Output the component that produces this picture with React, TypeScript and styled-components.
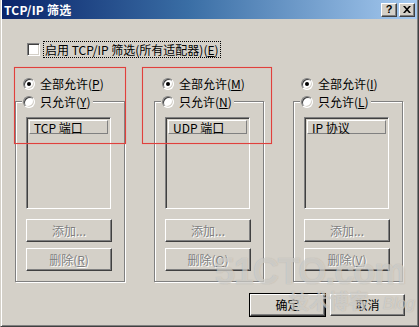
import React from 'react';
import styled, { createGlobalStyle } from 'styled-components';

const GlobalStyle = createGlobalStyle`
  html, body {
    margin: 0;
    padding: 0;
    background: #d4d0c8;
  }
  * {
    box-sizing: border-box;
  }
`;

const FONT = `"Noto Sans CJK SC", "Liberation Sans", sans-serif`;

type Column = {
  all: string;
  allKey: string;
  only: string;
  onlyKey: string;
  header: string;
  delKey: string;
};

const columns: Column[] = [
  { all: '全部允许', allKey: 'P', only: '只允许', onlyKey: 'Y', header: 'TCP 端口', delKey: 'R' },
  { all: '全部允许', allKey: 'M', only: '只允许', onlyKey: 'N', header: 'UDP 端口', delKey: 'O' },
  { all: '全部允许', allKey: 'I', only: '只允许', onlyKey: 'L', header: 'IP 协议', delKey: 'V' },
];

export default function App() {
  return (
    <>
      <GlobalStyle />
      <Window>
        <TitleBar>
          <Title>TCP/IP 筛选</Title>
          <CaptionButtons>
            <CaptionButton>
              <HelpGlyph>?</HelpGlyph>
            </CaptionButton>
            <CaptionButton>
              <svg width="8" height="7" viewBox="0 0 8 7">
                <path d="M0 0h2l2 2.2L6 0h2L5 3.5 8 7H6L4 4.8 2 7H0l3-3.5z" fill="#000" />
              </svg>
            </CaptionButton>
          </CaptionButtons>
        </TitleBar>

        <Body>
          <CheckRow>
            <CheckBox />
            <FocusLabel>
              启用 TCP/IP 筛选(所有适配器)(<u>E</u>)
            </FocusLabel>
          </CheckRow>

          <Columns>
            {columns.map((c) => (
              <Col key={c.header}>
                <RadioRow>
                  <Radio $checked />
                  <span>
                    {c.all}(<u>{c.allKey}</u>)
                  </span>
                </RadioRow>
                <Group>
                  <Legend>
                    <Radio />
                    <span>
                      {c.only}(<u>{c.onlyKey}</u>)
                    </span>
                  </Legend>
                  <ListBox>
                    <ListHeader>{c.header}</ListHeader>
                  </ListBox>
                  <ButtonStack>
                    <Button disabled>添加...</Button>
                    <Button disabled>
                      删除(<u>{c.delKey}</u>)
                    </Button>
                  </ButtonStack>
                </Group>
              </Col>
            ))}
          </Columns>

          <Footer>
            <Button $default>确定</Button>
            <Button>取消</Button>
          </Footer>
        </Body>

        <Highlight $left={13} $width={112} />
        <Highlight $left={141} $width={130} />

        <Watermark>
          <MarkBig>51CTO.com</MarkBig>
          <MarkRow>
            <MarkCn>技术博客</MarkCn>
            <MarkBlog>Blog</MarkBlog>
          </MarkRow>
        </Watermark>
      </Window>
    </>
  );
}

const Window = styled.div`
  position: relative;
  width: 419px;
  height: 327px;
  overflow: hidden;
  padding: 0 1px 1px 1px;
  background: #d4d0c8;
  border-left: 1px solid #d4d0c8;
  border-right: 1px solid #404040;
  border-bottom: 1px solid #404040;
  box-shadow: inset 1px 0 0 #fff, inset -1px -1px 0 #808080;
  display: flex;
  flex-direction: column;
  font-family: ${FONT};
  font-size: 12px;
  line-height: 14px;
  color: #000;
`;

const TitleBar = styled.div`
  height: 19px;
  flex-shrink: 0;
  display: flex;
  align-items: center;
  justify-content: space-between;
  padding: 0 2px 0 2px;
  background: linear-gradient(to right, #0a246a, #3a6ea5 45%, #a6caf0);
`;

const Title = styled.span`
  color: #fff;
  font-weight: bold;
  font-size: 12px;
  letter-spacing: 0.2px;
`;

const CaptionButtons = styled.div`
  display: flex;
  gap: 2px;
`;

const CaptionButton = styled.div`
  width: 16px;
  height: 14px;
  display: flex;
  align-items: center;
  justify-content: center;
  background: #d4d0c8;
  border: 1px solid;
  border-color: #fff #404040 #404040 #fff;
  box-shadow: inset -1px -1px 0 #808080;
`;

const HelpGlyph = styled.span`
  font-family: "Liberation Sans", sans-serif;
  font-weight: bold;
  font-size: 11px;
  line-height: 11px;
`;

const Body = styled.div`
  flex: 1;
  display: flex;
  flex-direction: column;
  padding: 22px 0 0 13px;
`;

const CheckRow = styled.div`
  display: flex;
  align-items: center;
  height: 17px;
  margin-left: 12px;
`;

const Sunken = `
  background: #fff;
  border: 1px solid;
  border-color: #808080 #fff #fff #808080;
  box-shadow: inset 1px 1px 0 #404040, inset -1px -1px 0 #d4d0c8;
`;

const CheckBox = styled.span`
  width: 13px;
  height: 13px;
  ${Sunken}
`;

const FocusLabel = styled.span`
  margin-left: 3px;
  padding: 0 1px;
  height: 17px;
  line-height: 15px;
  border: 1px dotted #000;
  white-space: nowrap;
`;

const Columns = styled.div`
  display: flex;
  gap: 29px;
  margin-top: 18px;
`;

const Col = styled.div`
  width: 110px;
  display: flex;
  flex-direction: column;
`;

const RadioRow = styled.label`
  display: flex;
  align-items: center;
  gap: 5px;
  height: 16px;
  padding-left: 8px;
  white-space: nowrap;
`;

const Radio = styled.span<{ $checked?: boolean }>`
  position: relative;
  width: 12px;
  height: 12px;
  flex-shrink: 0;
  border-radius: 50%;
  background: #fff;
  border: 1px solid;
  border-color: #808080 #fff #fff #808080;
  box-shadow: inset 1px 1px 0 #404040, inset -1px -1px 0 #d4d0c8;

  &::after {
    content: '';
    display: ${(p) => (p.$checked ? 'block' : 'none')};
    position: absolute;
    left: 3px;
    top: 3px;
    width: 4px;
    height: 4px;
    border-radius: 50%;
    background: #000;
  }
`;

const Group = styled.div`
  display: flex;
  flex-direction: column;
  margin-top: 9px;
  padding: 0 0 10px 10px;
  border: 1px solid #808080;
  box-shadow: inset 1px 1px 0 #fff, 1px 1px 0 #fff;
`;

const Legend = styled.label`
  align-self: flex-start;
  display: flex;
  align-items: center;
  gap: 5px;
  height: 16px;
  margin: -8px 0 0 -4px;
  padding: 0 2px 0 1px;
  background: #d4d0c8;
  white-space: nowrap;
`;

const ListBox = styled.div`
  width: 85px;
  height: 92px;
  margin-top: 7px;
  ${Sunken}
  background: #d4d0c8;
  padding: 2px;
`;

const ListHeader = styled.div`
  height: 14px;
  line-height: 13px;
  padding-left: 4px;
  border: 1px solid;
  border-color: #fff #808080 #808080 #fff;
  white-space: nowrap;
`;

const ButtonStack = styled.div`
  display: flex;
  flex-direction: column;
  gap: 6px;
  margin-top: 10px;
`;

const Button = styled.button<{ $default?: boolean }>`
  width: ${(p) => (p.$default ? '75px' : '86px')};
  height: 23px;
  padding: 0;
  font-family: ${FONT};
  font-size: 12px;
  line-height: 14px;
  color: #000;
  background: #d4d0c8;
  border: 1px solid;
  border-color: #fff #404040 #404040 #fff;
  box-shadow: inset -1px -1px 0 #808080;
  outline: ${(p) => (p.$default ? '1px solid #000' : 'none')};

  &:disabled {
    color: #808080;
    text-shadow: 1px 1px 0 #fff;
  }
`;

const Footer = styled.div`
  display: flex;
  justify-content: flex-end;
  gap: 5px;
  margin-top: 12px;
  padding-right: 12px;

  & > button {
    width: 75px;
    height: 22px;
  }
`;

const Highlight = styled.div<{ $left: number; $width: number }>`
  position: absolute;
  top: 67px;
  left: ${(p) => p.$left}px;
  width: ${(p) => p.$width}px;
  height: 77px;
  border: 1px solid #e0403c;
  box-shadow: 0 0 1px rgba(240, 120, 120, 0.7), inset 0 0 1px rgba(240, 120, 120, 0.7);
  pointer-events: none;
`;

const Watermark = styled.div`
  position: absolute;
  left: 214px;
  top: 254px;
  pointer-events: none;
  display: flex;
  flex-direction: column;
  font-family: "Liberation Sans", sans-serif;
  color: rgba(235, 233, 228, 0.55);
  text-shadow: 0 0 1px rgba(120, 118, 112, 0.45);
`;

const MarkBig = styled.div`
  font-size: 36px;
  line-height: 36px;
  font-weight: bold;
  letter-spacing: -1px;
`;

const MarkRow = styled.div`
  display: flex;
  align-items: baseline;
  gap: 14px;
  margin-left: 74px;
`;

const MarkCn = styled.div`
  font-family: ${FONT};
  font-size: 20px;
  line-height: 22px;
  font-weight: bold;
`;

const MarkBlog = styled.div`
  font-size: 16px;
  line-height: 18px;
  font-style: italic;
`;
